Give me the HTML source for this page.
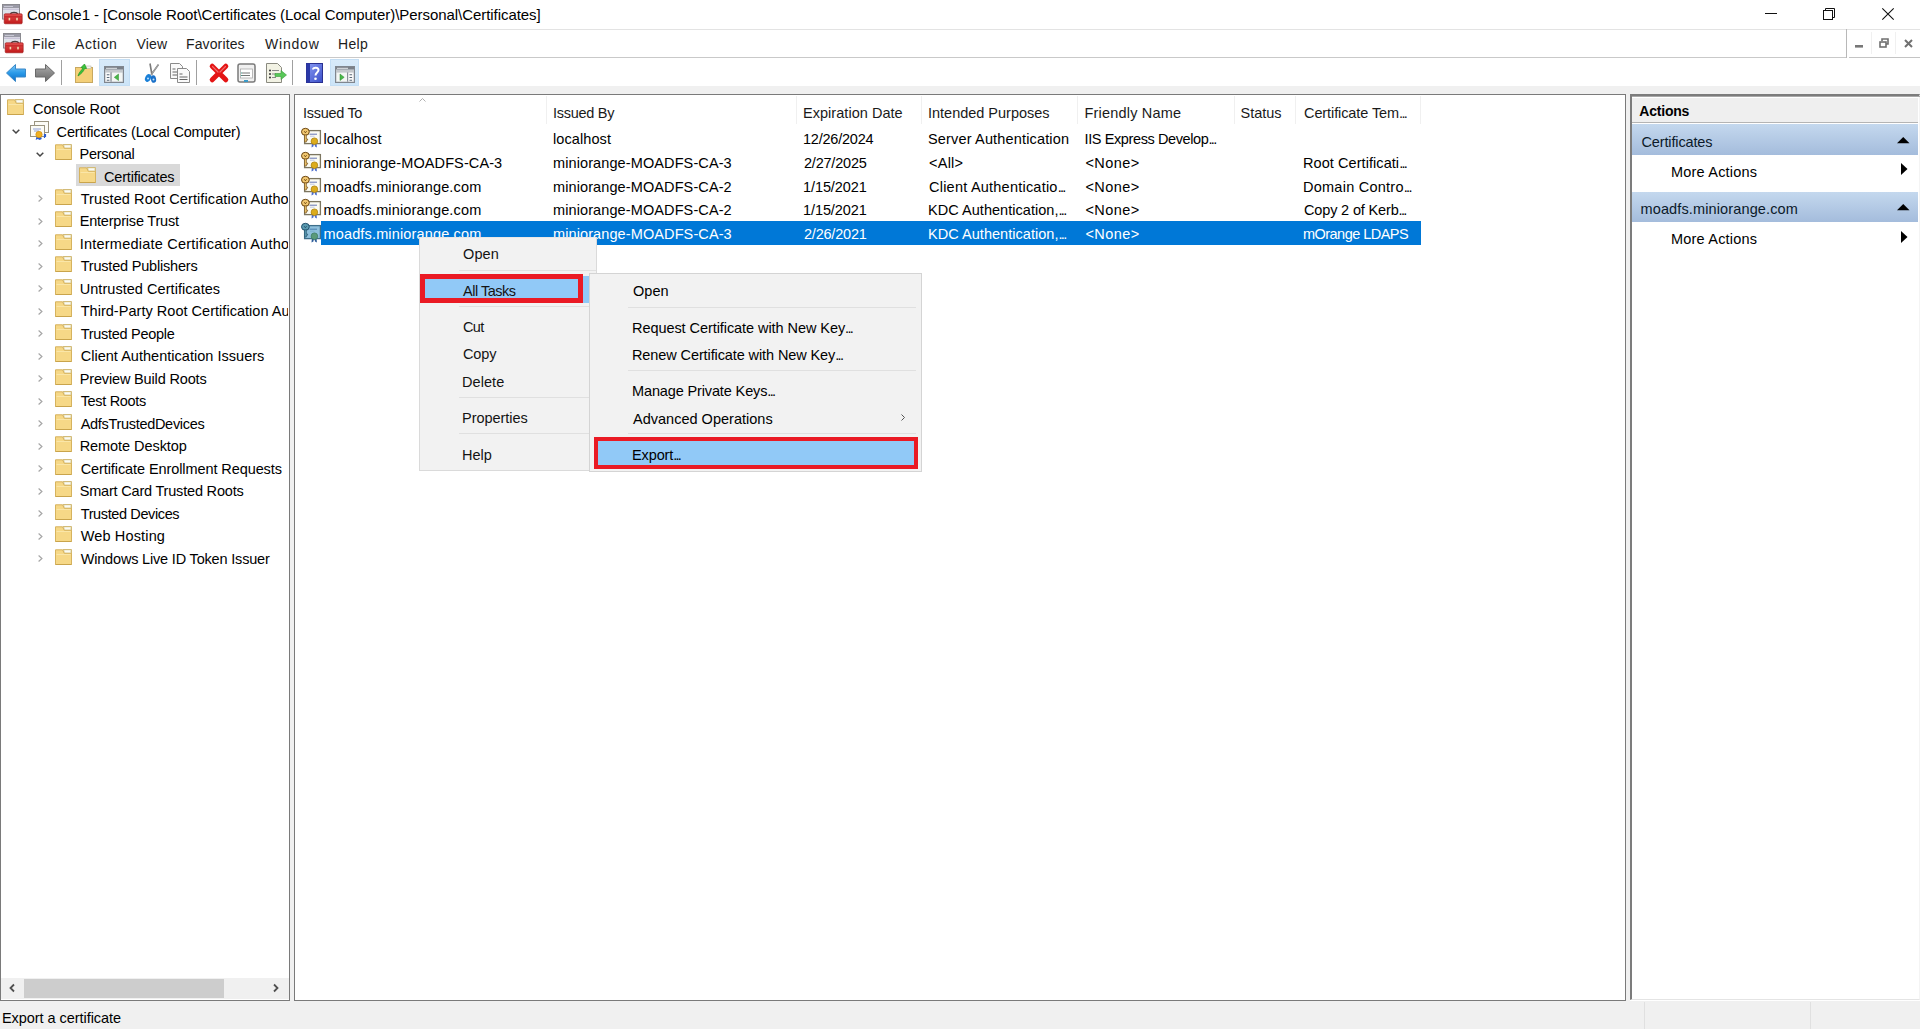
<!DOCTYPE html><html><head><meta charset="utf-8"><style>
html,body{margin:0;padding:0;width:1920px;height:1029px;overflow:hidden;background:#fff;font-family:"Liberation Sans",sans-serif;}
.a{position:absolute;box-sizing:border-box;}
.t{position:absolute;white-space:nowrap;line-height:20px;color:#000;}
.el{letter-spacing:-1.7px;margin-right:1.7px}
.clip{position:absolute;overflow:hidden;}
svg{position:absolute;overflow:visible;}
</style></head><body>
<svg style="left:2px;top:4px" width="22" height="21" viewBox="0 0 22 21">
<rect x=".5" y=".5" width="17" height="14.5" fill="#e4e4ea" stroke="#8a8a90"/>
<rect x="1" y="1" width="16" height="3" fill="#9a9aa6"/>
<path d="M2 2.5h9" stroke="#c8c8d4" stroke-width="1"/>
<rect x="1" y="4.5" width="16" height="1.5" fill="#c8c4d8"/>
<rect x="1.5" y="6.5" width="3" height="8" fill="#d8e4e8"/>
<rect x="5.5" y="6.5" width="11" height="4" fill="#dde0ea"/>
<path d="M8.5 10.2C9 7.8 15 7.8 15.5 10.2" fill="none" stroke="#4a4040" stroke-width="1.4"/>
<defs><linearGradient id="gtb" x1="0" y1="0" x2="0" y2="1"><stop offset="0" stop-color="#e45050"/><stop offset="1" stop-color="#c01818"/></linearGradient></defs>
<rect x="2.2" y="9.8" width="18" height="10" rx="1" fill="url(#gtb)" stroke="#9a1010" stroke-width=".6"/>
<path d="M2.5 12.8h17.5" stroke="#b82020" stroke-width=".8"/>
<rect x="6.6" y="13.8" width="1.6" height="2.6" fill="#f0d8b0"/>
<rect x="14.2" y="13.8" width="1.6" height="2.6" fill="#f0d8b0"/>
</svg><div class="t" style="left:27px;top:4.80px;font-size:15px;color:#000;letter-spacing:-0.053px;">Console1 - [Console Root\Certificates (Local Computer)\Personal\Certificates]</div>
<svg style="left:1765px;top:13px" width="12" height="1" viewBox="0 0 12 1"><rect width="12" height="1" fill="#111"/></svg><svg style="left:1823px;top:8px" width="12" height="12" viewBox="0 0 12 12"><path d="M2.5 2.5v-2h9v9h-2" fill="none" stroke="#111"/><rect x=".5" y="2.5" width="9" height="9" fill="none" stroke="#111"/></svg><svg style="left:1882px;top:8px" width="12" height="12" viewBox="0 0 12 12"><path d="M.3 .3l11.4 11.4M11.7 .3l-11.4 11.4" stroke="#111" stroke-width="1.1"/></svg><div class="a" style="left:0px;top:29px;width:1920px;height:1px;background:#e3e3e3;"></div>
<div class="a" style="left:0px;top:57px;width:1847px;height:1px;background:#c9c9c9;"></div>
<svg style="left:2.8px;top:33.2px" width="22" height="21" viewBox="0 0 22 21">
<rect x=".5" y=".5" width="17" height="14.5" fill="#e4e4ea" stroke="#8a8a90"/>
<rect x="1" y="1" width="16" height="3" fill="#9a9aa6"/>
<path d="M2 2.5h9" stroke="#c8c8d4" stroke-width="1"/>
<rect x="1" y="4.5" width="16" height="1.5" fill="#c8c4d8"/>
<rect x="1.5" y="6.5" width="3" height="8" fill="#d8e4e8"/>
<rect x="5.5" y="6.5" width="11" height="4" fill="#dde0ea"/>
<path d="M8.5 10.2C9 7.8 15 7.8 15.5 10.2" fill="none" stroke="#4a4040" stroke-width="1.4"/>
<defs><linearGradient id="gtb" x1="0" y1="0" x2="0" y2="1"><stop offset="0" stop-color="#e45050"/><stop offset="1" stop-color="#c01818"/></linearGradient></defs>
<rect x="2.2" y="9.8" width="18" height="10" rx="1" fill="url(#gtb)" stroke="#9a1010" stroke-width=".6"/>
<path d="M2.5 12.8h17.5" stroke="#b82020" stroke-width=".8"/>
<rect x="6.6" y="13.8" width="1.6" height="2.6" fill="#f0d8b0"/>
<rect x="14.2" y="13.8" width="1.6" height="2.6" fill="#f0d8b0"/>
</svg><div class="t" style="left:32px;top:33.80px;font-size:14px;color:#1c1c1c;letter-spacing:0.333px;">File</div>
<div class="t" style="left:75px;top:33.80px;font-size:14px;color:#1c1c1c;letter-spacing:0.600px;">Action</div>
<div class="t" style="left:136.5px;top:33.80px;font-size:14px;color:#1c1c1c;letter-spacing:0.167px;">View</div>
<div class="t" style="left:186px;top:33.80px;font-size:14px;color:#1c1c1c;letter-spacing:0.125px;">Favorites</div>
<div class="t" style="left:265px;top:33.80px;font-size:14px;color:#1c1c1c;letter-spacing:0.800px;">Window</div>
<div class="t" style="left:338px;top:33.80px;font-size:14px;color:#1c1c1c;letter-spacing:0.333px;">Help</div>
<div class="a" style="left:1846px;top:29px;width:1px;height:29px;background:#b8b8b8;"></div>
<div class="a" style="left:1849px;top:56.5px;width:71px;height:1.5px;background:#c4c4c4;"></div>
<div class="a" style="left:1871px;top:32px;width:1px;height:22px;background:#f0f0f0;"></div>
<div class="a" style="left:1895px;top:32px;width:1px;height:22px;background:#f0f0f0;"></div>
<svg style="left:1855px;top:45px" width="8" height="3"><rect width="8" height="2.6" fill="#777"/></svg><svg style="left:1879px;top:38px" width="10" height="10" viewBox="0 0 10 10"><path d="M3 3V1h6v5H7" fill="none" stroke="#707070" stroke-width="1.6"/><rect x="1" y="4" width="6" height="5" fill="none" stroke="#707070" stroke-width="1.6"/></svg><svg style="left:1904px;top:39px" width="9" height="9" viewBox="0 0 9 9"><path d="M1 1l7 7M8 1l-7 7" stroke="#707070" stroke-width="2"/></svg><div class="a" style="left:0px;top:86px;width:1920px;height:8px;background:#f0f0f0;"></div>
<svg style="left:6px;top:64px" width="20" height="18" viewBox="0 0 20 18">
<defs><linearGradient id="gb" x1="0" y1="0" x2="0" y2="1"><stop offset="0" stop-color="#7cc8f8"/><stop offset=".5" stop-color="#2a9ae8"/><stop offset="1" stop-color="#0a6cc8"/></linearGradient></defs>
<path d="M.5 9L9.5 .5V5H19.5V13H9.5V17.5Z" fill="url(#gb)" stroke="#3a88c8" stroke-width="1" stroke-linejoin="round"/>
</svg><svg style="left:35px;top:64px" width="20" height="18" viewBox="0 0 20 18">
<defs><linearGradient id="gf" x1="0" y1="0" x2="0" y2="1"><stop offset="0" stop-color="#b0b0b0"/><stop offset=".5" stop-color="#8a8a8a"/><stop offset="1" stop-color="#6a6a6a"/></linearGradient></defs>
<path d="M19.5 9L10.5 .5V5H.5V13H10.5V17.5Z" fill="url(#gf)" stroke="#6a6a6a" stroke-width="1" stroke-linejoin="round"/>
</svg><div class="a" style="left:61px;top:60px;width:1px;height:25px;background:#a0a0a0;"></div>
<svg style="left:75px;top:64px" width="18" height="19" viewBox="0 0 18 19">
<rect x=".5" y="3.5" width="17" height="15" fill="#f4cf78" stroke="#c8a860"/>
<rect x="11" y="2" width="5" height="2.5" fill="#f4f4f0" stroke="#b8b8a8" stroke-width=".6"/>
<path d="M3 12C4 8 7 6 8 4L6 3.5 9.5 0 11.5 4.5 9.5 4.5C9 7 6 10 3 12Z" fill="#3cc43c" stroke="#2a9a2a" stroke-width=".8"/>
</svg><div class="a" style="left:99px;top:59px;width:31px;height:27px;background:linear-gradient(#d8eaf9,#cce4f7);border:1px solid #c4def4;"></div>
<svg style="left:104px;top:66px" width="20" height="17" viewBox="0 0 20 17">
<rect x=".5" y=".5" width="19" height="16" fill="#b8bec4" stroke="#80868e"/>
<rect x="1" y="1" width="18" height="2.6" fill="#7a8088"/>
<path d="M2 2.3h11" stroke="#e4e6ea" stroke-width="1"/>
<rect x="1" y="3.6" width="18" height="2.4" fill="#c4c8cc"/>
<rect x="1.5" y="6.5" width="5" height="9" fill="#fafafa"/><path d="M2.8 8.8h2.6M2.8 11.5h2.6M2.8 14.2h2.6" stroke="#5a6a7a" stroke-width="1.1"/>
<rect x="6.5" y="6.5" width="1.2" height="9" fill="#8a9098"/>
<rect x="7.8" y="6.5" width="10.7" height="9" fill="#f4f6f4"/><path d="M14.5 8v6.5l-4.2-3.2z" fill="#48b848" stroke="#2e8a2e" stroke-width=".5"/>
</svg><svg style="left:144px;top:63px" width="16" height="20" viewBox="0 0 16 20">
<path d="M6 .5L8 12M14.5 1.5L7 12" stroke="#7a7a7a" stroke-width="1.6"/>
<path d="M14.5 1.5L7 12" stroke="#c8c8c8" stroke-width=".6"/>
<ellipse cx="4" cy="15" rx="2.8" ry="4" fill="#1a80d8" transform="rotate(25 4 15)"/>
<ellipse cx="9.5" cy="16" rx="2.6" ry="3.8" fill="#1a70c8" transform="rotate(-10 9.5 16)"/>
<circle cx="4" cy="15.5" r="1" fill="#bfe0ff"/><circle cx="9.5" cy="16.5" r="1" fill="#bfe0ff"/>
</svg><svg style="left:170px;top:63px" width="21" height="20" viewBox="0 0 21 20">
<path d="M.5 .5h9l3 3v12h-12z" fill="#fafafa" stroke="#8a8a8a"/>
<path d="M2.5 6h3M2.5 9h6M2.5 12h6" stroke="#666" stroke-width="1"/>
<path d="M7.5 5.5h9l3 3v11h-12z" fill="#fafafa" stroke="#8a8a8a"/>
<path d="M9.5 11h3M9.5 14h8M9.5 16.5h8" stroke="#666" stroke-width="1"/>
</svg><div class="a" style="left:196px;top:60px;width:1px;height:25px;background:#a0a0a0;"></div>
<svg style="left:209px;top:63px" width="20" height="20" viewBox="0 0 20 20">
<path d="M3.2 3.2L16.8 16.8M16.8 3.2L3.2 16.8" stroke="#e41414" stroke-width="5" stroke-linecap="round"/>
<path d="M3.5 3.5L9 9M16.5 3.5L11 9" stroke="#f06a6a" stroke-width="1.2" stroke-linecap="round"/>
</svg><svg style="left:237px;top:63px" width="19" height="20" viewBox="0 0 19 20">
<rect x="1" y="1" width="17" height="18" rx="2" fill="#f0f0f0" stroke="#7a7a7a" stroke-width="1.5"/>
<rect x="3.5" y="6" width="12" height="9" fill="#fff" stroke="#aaa" stroke-width=".8"/>
<path d="M5 10h8M5 12.5h8" stroke="#777" stroke-width="1"/>
<path d="M4 10h1M4 12.5h1" stroke="#3a9a8a" stroke-width="1"/>
<rect x="7" y="17" width="4" height="2" fill="#3a9ac8"/>
</svg><svg style="left:266px;top:63px" width="21" height="20" viewBox="0 0 21 20">
<path d="M.5 .5h11l4 4v15h-15z" fill="#f2f2e4" stroke="#8a8a80"/>
<circle cx="4" cy="7.5" r="1" fill="#333"/><circle cx="4" cy="11" r="1" fill="#333"/><circle cx="4" cy="14.5" r="1" fill="#333"/>
<path d="M6 7.5h7M6 11h4M6 14.5h4" stroke="#888" stroke-width="1"/>
<path d="M9 10.5h6v-3l5.5 4.5-5.5 4.5v-3h-6z" fill="#58c858" stroke="#3a9a3a" stroke-width=".6"/>
</svg><div class="a" style="left:292px;top:60px;width:1px;height:25px;background:#a0a0a0;"></div>
<svg style="left:306px;top:63px" width="17" height="20" viewBox="0 0 17 20">
<defs><linearGradient id="gh" x1="0" y1="0" x2="1" y2="1"><stop offset="0" stop-color="#8a9cf4"/><stop offset="1" stop-color="#3a4ec8"/></linearGradient></defs>
<rect x=".5" y=".5" width="16" height="19" fill="url(#gh)" stroke="#2a3090"/>
<rect x=".5" y=".5" width="3.5" height="19" fill="#2a38a8"/>
<path d="M7 6.5C7 4 12.5 4 12.5 7C12.5 9.5 9.5 9.5 9.5 12.5" fill="none" stroke="#fff" stroke-width="2"/>
<circle cx="9.5" cy="15.8" r="1.3" fill="#fff"/>
</svg><div class="a" style="left:330px;top:59px;width:29px;height:27px;background:linear-gradient(#d8eaf9,#cce4f7);border:1px solid #c4def4;"></div>
<svg style="left:335px;top:66px" width="20" height="17" viewBox="0 0 20 17">
<rect x=".5" y=".5" width="19" height="16" fill="#b8bec4" stroke="#80868e"/>
<rect x="1" y="1" width="18" height="2.6" fill="#7a8088"/>
<path d="M2 2.3h11" stroke="#e4e6ea" stroke-width="1"/>
<rect x="1" y="3.6" width="18" height="2.4" fill="#c4c8cc"/>
<rect x="1.5" y="6.5" width="10.5" height="9" fill="#f4f6f4"/><path d="M5 8v6.5l4.2-3.2z" fill="#48b848" stroke="#2e8a2e" stroke-width=".5"/>
<rect x="12" y="6.5" width="1.2" height="9" fill="#8a9098"/>
<rect x="13.3" y="6.5" width="5.2" height="9" fill="#fafafa"/><path d="M14.5 8.8h2.6M14.5 11.5h2.6M14.5 14.2h2.6" stroke="#5a6a7a" stroke-width="1.1"/>
</svg><div class="a" style="left:0px;top:94px;width:290px;height:907px;background:#fff;border:1px solid #7a7a7a;border-top:1px solid #7a7a7a;"></div>
<div class="a" style="left:290px;top:94px;width:4px;height:907px;background:#f0f0f0;"></div>
<div class="clip" style="left:1px;top:95px;width:287px;height:880px;">
<div class="a" style="left:-1px;top:-95px;width:1920px;height:1029px;"><svg style="left:7px;top:99px" width="17" height="16" viewBox="0 0 17 16">
<path d="M8 .5h8.5v5h-8.5z" fill="#e9e4c8" stroke="#d2bb78" stroke-width="1"/>
<rect x="10" y="1.5" width="5" height="2" fill="#fbfbf4"/>
<path d="M.5 .8H7.5L9.3 4.3H16.5V15.5H.5Z" fill="#f6d887" stroke="#d6b35e" stroke-width="1" stroke-linejoin="round"/>
<path d="M1.5 5.5H15.5" stroke="#fae6a8" stroke-width="1"/>
<path d="M.5 15.5H16.5" stroke="#c9a44c" stroke-width="1"/>
</svg><div class="t" style="left:33px;top:99.00px;font-size:14.5px;color:#000;letter-spacing:-0.091px;">Console Root</div>
<svg style="left:12px;top:129px" width="8" height="5" viewBox="0 0 8 5"><path d="M.7 .7l3.3 3.3 3.3-3.3" fill="none" stroke="#454545" stroke-width="1.5"/></svg><svg style="left:30px;top:121px" width="20" height="20" viewBox="0 0 20 20">
<rect x="4.5" y=".5" width="14" height="11" fill="#fbfbf6" stroke="#9a9480"/>
<rect x=".5" y="4.5" width="14" height="11" fill="#fbfbf6" stroke="#9a9480"/>
<path d="M3 8h8M4 10h5" stroke="#8fa0d8" stroke-width="1"/>
<path d="M6.5 15.5l-.8 3.5 2-1 2 1 2-1 -.8-3.5z" fill="#2a5bd0"/>
<path d="M14.5 13v4M15.5 13v3" stroke="#2a5bd0" stroke-width="1.2"/>
<circle cx="9" cy="13.5" r="3.2" fill="#f0b020" stroke="#c88a10" stroke-width=".6"/>
</svg><div class="t" style="left:56.6px;top:121.50px;font-size:14.5px;color:#000;letter-spacing:-0.164px;">Certificates (Local Computer)</div>
<svg style="left:36px;top:151.5px" width="8" height="5" viewBox="0 0 8 5"><path d="M.7 .7l3.3 3.3 3.3-3.3" fill="none" stroke="#454545" stroke-width="1.5"/></svg><svg style="left:55px;top:144px" width="17" height="16" viewBox="0 0 17 16">
<path d="M8 .5h8.5v5h-8.5z" fill="#e9e4c8" stroke="#d2bb78" stroke-width="1"/>
<rect x="10" y="1.5" width="5" height="2" fill="#fbfbf4"/>
<path d="M.5 .8H7.5L9.3 4.3H16.5V15.5H.5Z" fill="#f6d887" stroke="#d6b35e" stroke-width="1" stroke-linejoin="round"/>
<path d="M1.5 5.5H15.5" stroke="#fae6a8" stroke-width="1"/>
<path d="M.5 15.5H16.5" stroke="#c9a44c" stroke-width="1"/>
</svg><div class="t" style="left:79.5px;top:144.00px;font-size:14.5px;color:#000;letter-spacing:-0.286px;">Personal</div>
<div class="a" style="left:75.5px;top:164px;width:104px;height:22px;background:#d9d9d9;"></div>
<svg style="left:78.5px;top:166.5px" width="17" height="16" viewBox="0 0 17 16">
<path d="M8 .5h8.5v5h-8.5z" fill="#e9e4c8" stroke="#d2bb78" stroke-width="1"/>
<rect x="10" y="1.5" width="5" height="2" fill="#fbfbf4"/>
<path d="M.5 .8H7.5L9.3 4.3H16.5V15.5H.5Z" fill="#f6d887" stroke="#d6b35e" stroke-width="1" stroke-linejoin="round"/>
<path d="M1.5 5.5H15.5" stroke="#fae6a8" stroke-width="1"/>
<path d="M.5 15.5H16.5" stroke="#c9a44c" stroke-width="1"/>
</svg><div class="t" style="left:104px;top:166.50px;font-size:14.5px;color:#000;letter-spacing:-0.182px;">Certificates</div>
<svg style="left:38px;top:195.0px" width="5" height="7" viewBox="0 0 5 7"><path d="M.6 .5l3.3 3-3.3 3" fill="none" stroke="#a6a6a6" stroke-width="1.2"/></svg><svg style="left:55px;top:188.6px" width="17" height="16" viewBox="0 0 17 16">
<path d="M8 .5h8.5v5h-8.5z" fill="#e9e4c8" stroke="#d2bb78" stroke-width="1"/>
<rect x="10" y="1.5" width="5" height="2" fill="#fbfbf4"/>
<path d="M.5 .8H7.5L9.3 4.3H16.5V15.5H.5Z" fill="#f6d887" stroke="#d6b35e" stroke-width="1" stroke-linejoin="round"/>
<path d="M1.5 5.5H15.5" stroke="#fae6a8" stroke-width="1"/>
<path d="M.5 15.5H16.5" stroke="#c9a44c" stroke-width="1"/>
</svg><div class="t" style="left:80.7px;top:188.60px;font-size:14.5px;color:#000;letter-spacing:0.097px;">Trusted Root Certification Autho</div>
<svg style="left:38px;top:217.5px" width="5" height="7" viewBox="0 0 5 7"><path d="M.6 .5l3.3 3-3.3 3" fill="none" stroke="#a6a6a6" stroke-width="1.2"/></svg><svg style="left:55px;top:211.1px" width="17" height="16" viewBox="0 0 17 16">
<path d="M8 .5h8.5v5h-8.5z" fill="#e9e4c8" stroke="#d2bb78" stroke-width="1"/>
<rect x="10" y="1.5" width="5" height="2" fill="#fbfbf4"/>
<path d="M.5 .8H7.5L9.3 4.3H16.5V15.5H.5Z" fill="#f6d887" stroke="#d6b35e" stroke-width="1" stroke-linejoin="round"/>
<path d="M1.5 5.5H15.5" stroke="#fae6a8" stroke-width="1"/>
<path d="M.5 15.5H16.5" stroke="#c9a44c" stroke-width="1"/>
</svg><div class="t" style="left:79.7px;top:211.10px;font-size:14.5px;color:#000;letter-spacing:-0.200px;">Enterprise Trust</div>
<svg style="left:38px;top:240.0px" width="5" height="7" viewBox="0 0 5 7"><path d="M.6 .5l3.3 3-3.3 3" fill="none" stroke="#a6a6a6" stroke-width="1.2"/></svg><svg style="left:55px;top:233.6px" width="17" height="16" viewBox="0 0 17 16">
<path d="M8 .5h8.5v5h-8.5z" fill="#e9e4c8" stroke="#d2bb78" stroke-width="1"/>
<rect x="10" y="1.5" width="5" height="2" fill="#fbfbf4"/>
<path d="M.5 .8H7.5L9.3 4.3H16.5V15.5H.5Z" fill="#f6d887" stroke="#d6b35e" stroke-width="1" stroke-linejoin="round"/>
<path d="M1.5 5.5H15.5" stroke="#fae6a8" stroke-width="1"/>
<path d="M.5 15.5H16.5" stroke="#c9a44c" stroke-width="1"/>
</svg><div class="t" style="left:79.7px;top:233.60px;font-size:14.5px;color:#000;letter-spacing:0.226px;">Intermediate Certification Autho</div>
<svg style="left:38px;top:262.5px" width="5" height="7" viewBox="0 0 5 7"><path d="M.6 .5l3.3 3-3.3 3" fill="none" stroke="#a6a6a6" stroke-width="1.2"/></svg><svg style="left:55px;top:256.1px" width="17" height="16" viewBox="0 0 17 16">
<path d="M8 .5h8.5v5h-8.5z" fill="#e9e4c8" stroke="#d2bb78" stroke-width="1"/>
<rect x="10" y="1.5" width="5" height="2" fill="#fbfbf4"/>
<path d="M.5 .8H7.5L9.3 4.3H16.5V15.5H.5Z" fill="#f6d887" stroke="#d6b35e" stroke-width="1" stroke-linejoin="round"/>
<path d="M1.5 5.5H15.5" stroke="#fae6a8" stroke-width="1"/>
<path d="M.5 15.5H16.5" stroke="#c9a44c" stroke-width="1"/>
</svg><div class="t" style="left:80.7px;top:256.10px;font-size:14.5px;color:#000;letter-spacing:-0.200px;">Trusted Publishers</div>
<svg style="left:38px;top:285.0px" width="5" height="7" viewBox="0 0 5 7"><path d="M.6 .5l3.3 3-3.3 3" fill="none" stroke="#a6a6a6" stroke-width="1.2"/></svg><svg style="left:55px;top:278.6px" width="17" height="16" viewBox="0 0 17 16">
<path d="M8 .5h8.5v5h-8.5z" fill="#e9e4c8" stroke="#d2bb78" stroke-width="1"/>
<rect x="10" y="1.5" width="5" height="2" fill="#fbfbf4"/>
<path d="M.5 .8H7.5L9.3 4.3H16.5V15.5H.5Z" fill="#f6d887" stroke="#d6b35e" stroke-width="1" stroke-linejoin="round"/>
<path d="M1.5 5.5H15.5" stroke="#fae6a8" stroke-width="1"/>
<path d="M.5 15.5H16.5" stroke="#c9a44c" stroke-width="1"/>
</svg><div class="t" style="left:79.7px;top:278.60px;font-size:14.5px;color:#000;letter-spacing:0.048px;">Untrusted Certificates</div>
<svg style="left:38px;top:307.5px" width="5" height="7" viewBox="0 0 5 7"><path d="M.6 .5l3.3 3-3.3 3" fill="none" stroke="#a6a6a6" stroke-width="1.2"/></svg><svg style="left:55px;top:301.1px" width="17" height="16" viewBox="0 0 17 16">
<path d="M8 .5h8.5v5h-8.5z" fill="#e9e4c8" stroke="#d2bb78" stroke-width="1"/>
<rect x="10" y="1.5" width="5" height="2" fill="#fbfbf4"/>
<path d="M.5 .8H7.5L9.3 4.3H16.5V15.5H.5Z" fill="#f6d887" stroke="#d6b35e" stroke-width="1" stroke-linejoin="round"/>
<path d="M1.5 5.5H15.5" stroke="#fae6a8" stroke-width="1"/>
<path d="M.5 15.5H16.5" stroke="#c9a44c" stroke-width="1"/>
</svg><div class="t" style="left:80.7px;top:301.10px;font-size:14.5px;color:#000;letter-spacing:0.030px;">Third-Party Root Certification Aut</div>
<svg style="left:38px;top:330.0px" width="5" height="7" viewBox="0 0 5 7"><path d="M.6 .5l3.3 3-3.3 3" fill="none" stroke="#a6a6a6" stroke-width="1.2"/></svg><svg style="left:55px;top:323.6px" width="17" height="16" viewBox="0 0 17 16">
<path d="M8 .5h8.5v5h-8.5z" fill="#e9e4c8" stroke="#d2bb78" stroke-width="1"/>
<rect x="10" y="1.5" width="5" height="2" fill="#fbfbf4"/>
<path d="M.5 .8H7.5L9.3 4.3H16.5V15.5H.5Z" fill="#f6d887" stroke="#d6b35e" stroke-width="1" stroke-linejoin="round"/>
<path d="M1.5 5.5H15.5" stroke="#fae6a8" stroke-width="1"/>
<path d="M.5 15.5H16.5" stroke="#c9a44c" stroke-width="1"/>
</svg><div class="t" style="left:80.7px;top:323.60px;font-size:14.5px;color:#000;letter-spacing:-0.285px;">Trusted People</div>
<svg style="left:38px;top:352.5px" width="5" height="7" viewBox="0 0 5 7"><path d="M.6 .5l3.3 3-3.3 3" fill="none" stroke="#a6a6a6" stroke-width="1.2"/></svg><svg style="left:55px;top:346.1px" width="17" height="16" viewBox="0 0 17 16">
<path d="M8 .5h8.5v5h-8.5z" fill="#e9e4c8" stroke="#d2bb78" stroke-width="1"/>
<rect x="10" y="1.5" width="5" height="2" fill="#fbfbf4"/>
<path d="M.5 .8H7.5L9.3 4.3H16.5V15.5H.5Z" fill="#f6d887" stroke="#d6b35e" stroke-width="1" stroke-linejoin="round"/>
<path d="M1.5 5.5H15.5" stroke="#fae6a8" stroke-width="1"/>
<path d="M.5 15.5H16.5" stroke="#c9a44c" stroke-width="1"/>
</svg><div class="t" style="left:80.7px;top:346.10px;font-size:14.5px;color:#000;letter-spacing:0.025px;">Client Authentication Issuers</div>
<svg style="left:38px;top:375.0px" width="5" height="7" viewBox="0 0 5 7"><path d="M.6 .5l3.3 3-3.3 3" fill="none" stroke="#a6a6a6" stroke-width="1.2"/></svg><svg style="left:55px;top:368.6px" width="17" height="16" viewBox="0 0 17 16">
<path d="M8 .5h8.5v5h-8.5z" fill="#e9e4c8" stroke="#d2bb78" stroke-width="1"/>
<rect x="10" y="1.5" width="5" height="2" fill="#fbfbf4"/>
<path d="M.5 .8H7.5L9.3 4.3H16.5V15.5H.5Z" fill="#f6d887" stroke="#d6b35e" stroke-width="1" stroke-linejoin="round"/>
<path d="M1.5 5.5H15.5" stroke="#fae6a8" stroke-width="1"/>
<path d="M.5 15.5H16.5" stroke="#c9a44c" stroke-width="1"/>
</svg><div class="t" style="left:79.7px;top:368.60px;font-size:14.5px;color:#000;letter-spacing:-0.150px;">Preview Build Roots</div>
<svg style="left:38px;top:397.5px" width="5" height="7" viewBox="0 0 5 7"><path d="M.6 .5l3.3 3-3.3 3" fill="none" stroke="#a6a6a6" stroke-width="1.2"/></svg><svg style="left:55px;top:391.1px" width="17" height="16" viewBox="0 0 17 16">
<path d="M8 .5h8.5v5h-8.5z" fill="#e9e4c8" stroke="#d2bb78" stroke-width="1"/>
<rect x="10" y="1.5" width="5" height="2" fill="#fbfbf4"/>
<path d="M.5 .8H7.5L9.3 4.3H16.5V15.5H.5Z" fill="#f6d887" stroke="#d6b35e" stroke-width="1" stroke-linejoin="round"/>
<path d="M1.5 5.5H15.5" stroke="#fae6a8" stroke-width="1"/>
<path d="M.5 15.5H16.5" stroke="#c9a44c" stroke-width="1"/>
</svg><div class="t" style="left:80.7px;top:391.10px;font-size:14.5px;color:#000;letter-spacing:-0.333px;">Test Roots</div>
<svg style="left:38px;top:420.0px" width="5" height="7" viewBox="0 0 5 7"><path d="M.6 .5l3.3 3-3.3 3" fill="none" stroke="#a6a6a6" stroke-width="1.2"/></svg><svg style="left:55px;top:413.6px" width="17" height="16" viewBox="0 0 17 16">
<path d="M8 .5h8.5v5h-8.5z" fill="#e9e4c8" stroke="#d2bb78" stroke-width="1"/>
<rect x="10" y="1.5" width="5" height="2" fill="#fbfbf4"/>
<path d="M.5 .8H7.5L9.3 4.3H16.5V15.5H.5Z" fill="#f6d887" stroke="#d6b35e" stroke-width="1" stroke-linejoin="round"/>
<path d="M1.5 5.5H15.5" stroke="#fae6a8" stroke-width="1"/>
<path d="M.5 15.5H16.5" stroke="#c9a44c" stroke-width="1"/>
</svg><div class="t" style="left:80.7px;top:413.60px;font-size:14.5px;color:#000;letter-spacing:-0.306px;">AdfsTrustedDevices</div>
<svg style="left:38px;top:442.5px" width="5" height="7" viewBox="0 0 5 7"><path d="M.6 .5l3.3 3-3.3 3" fill="none" stroke="#a6a6a6" stroke-width="1.2"/></svg><svg style="left:55px;top:436.1px" width="17" height="16" viewBox="0 0 17 16">
<path d="M8 .5h8.5v5h-8.5z" fill="#e9e4c8" stroke="#d2bb78" stroke-width="1"/>
<rect x="10" y="1.5" width="5" height="2" fill="#fbfbf4"/>
<path d="M.5 .8H7.5L9.3 4.3H16.5V15.5H.5Z" fill="#f6d887" stroke="#d6b35e" stroke-width="1" stroke-linejoin="round"/>
<path d="M1.5 5.5H15.5" stroke="#fae6a8" stroke-width="1"/>
<path d="M.5 15.5H16.5" stroke="#c9a44c" stroke-width="1"/>
</svg><div class="t" style="left:79.7px;top:436.10px;font-size:14.5px;color:#000;letter-spacing:-0.062px;">Remote Desktop</div>
<svg style="left:38px;top:465.0px" width="5" height="7" viewBox="0 0 5 7"><path d="M.6 .5l3.3 3-3.3 3" fill="none" stroke="#a6a6a6" stroke-width="1.2"/></svg><svg style="left:55px;top:458.6px" width="17" height="16" viewBox="0 0 17 16">
<path d="M8 .5h8.5v5h-8.5z" fill="#e9e4c8" stroke="#d2bb78" stroke-width="1"/>
<rect x="10" y="1.5" width="5" height="2" fill="#fbfbf4"/>
<path d="M.5 .8H7.5L9.3 4.3H16.5V15.5H.5Z" fill="#f6d887" stroke="#d6b35e" stroke-width="1" stroke-linejoin="round"/>
<path d="M1.5 5.5H15.5" stroke="#fae6a8" stroke-width="1"/>
<path d="M.5 15.5H16.5" stroke="#c9a44c" stroke-width="1"/>
</svg><div class="t" style="left:80.7px;top:458.60px;font-size:14.5px;color:#000;letter-spacing:-0.087px;">Certificate Enrollment Requests</div>
<svg style="left:38px;top:487.5px" width="5" height="7" viewBox="0 0 5 7"><path d="M.6 .5l3.3 3-3.3 3" fill="none" stroke="#a6a6a6" stroke-width="1.2"/></svg><svg style="left:55px;top:481.1px" width="17" height="16" viewBox="0 0 17 16">
<path d="M8 .5h8.5v5h-8.5z" fill="#e9e4c8" stroke="#d2bb78" stroke-width="1"/>
<rect x="10" y="1.5" width="5" height="2" fill="#fbfbf4"/>
<path d="M.5 .8H7.5L9.3 4.3H16.5V15.5H.5Z" fill="#f6d887" stroke="#d6b35e" stroke-width="1" stroke-linejoin="round"/>
<path d="M1.5 5.5H15.5" stroke="#fae6a8" stroke-width="1"/>
<path d="M.5 15.5H16.5" stroke="#c9a44c" stroke-width="1"/>
</svg><div class="t" style="left:79.7px;top:481.10px;font-size:14.5px;color:#000;letter-spacing:-0.191px;">Smart Card Trusted Roots</div>
<svg style="left:38px;top:510.0px" width="5" height="7" viewBox="0 0 5 7"><path d="M.6 .5l3.3 3-3.3 3" fill="none" stroke="#a6a6a6" stroke-width="1.2"/></svg><svg style="left:55px;top:503.6px" width="17" height="16" viewBox="0 0 17 16">
<path d="M8 .5h8.5v5h-8.5z" fill="#e9e4c8" stroke="#d2bb78" stroke-width="1"/>
<rect x="10" y="1.5" width="5" height="2" fill="#fbfbf4"/>
<path d="M.5 .8H7.5L9.3 4.3H16.5V15.5H.5Z" fill="#f6d887" stroke="#d6b35e" stroke-width="1" stroke-linejoin="round"/>
<path d="M1.5 5.5H15.5" stroke="#fae6a8" stroke-width="1"/>
<path d="M.5 15.5H16.5" stroke="#c9a44c" stroke-width="1"/>
</svg><div class="t" style="left:80.7px;top:503.60px;font-size:14.5px;color:#000;letter-spacing:-0.379px;">Trusted Devices</div>
<svg style="left:38px;top:532.5px" width="5" height="7" viewBox="0 0 5 7"><path d="M.6 .5l3.3 3-3.3 3" fill="none" stroke="#a6a6a6" stroke-width="1.2"/></svg><svg style="left:55px;top:526.1px" width="17" height="16" viewBox="0 0 17 16">
<path d="M8 .5h8.5v5h-8.5z" fill="#e9e4c8" stroke="#d2bb78" stroke-width="1"/>
<rect x="10" y="1.5" width="5" height="2" fill="#fbfbf4"/>
<path d="M.5 .8H7.5L9.3 4.3H16.5V15.5H.5Z" fill="#f6d887" stroke="#d6b35e" stroke-width="1" stroke-linejoin="round"/>
<path d="M1.5 5.5H15.5" stroke="#fae6a8" stroke-width="1"/>
<path d="M.5 15.5H16.5" stroke="#c9a44c" stroke-width="1"/>
</svg><div class="t" style="left:80.7px;top:526.10px;font-size:14.5px;color:#000;letter-spacing:0.150px;">Web Hosting</div>
<svg style="left:38px;top:555.0px" width="5" height="7" viewBox="0 0 5 7"><path d="M.6 .5l3.3 3-3.3 3" fill="none" stroke="#a6a6a6" stroke-width="1.2"/></svg><svg style="left:55px;top:548.6px" width="17" height="16" viewBox="0 0 17 16">
<path d="M8 .5h8.5v5h-8.5z" fill="#e9e4c8" stroke="#d2bb78" stroke-width="1"/>
<rect x="10" y="1.5" width="5" height="2" fill="#fbfbf4"/>
<path d="M.5 .8H7.5L9.3 4.3H16.5V15.5H.5Z" fill="#f6d887" stroke="#d6b35e" stroke-width="1" stroke-linejoin="round"/>
<path d="M1.5 5.5H15.5" stroke="#fae6a8" stroke-width="1"/>
<path d="M.5 15.5H16.5" stroke="#c9a44c" stroke-width="1"/>
</svg><div class="t" style="left:80.7px;top:548.60px;font-size:14.5px;color:#000;letter-spacing:-0.178px;">Windows Live ID Token Issuer</div>
</div></div>
<div class="a" style="left:1px;top:978px;width:288px;height:21px;background:#f0f0f0;"></div>
<div class="a" style="left:24px;top:979px;width:200px;height:18.5px;background:#cdcdcd;"></div>
<svg style="left:9px;top:984px" width="6" height="8" viewBox="0 0 6 8"><path d="M5 .5L1.5 4 5 7.5" fill="none" stroke="#505050" stroke-width="1.8"/></svg><svg style="left:273px;top:984px" width="6" height="8" viewBox="0 0 6 8"><path d="M1 .5L4.5 4 1 7.5" fill="none" stroke="#505050" stroke-width="1.8"/></svg><div class="a" style="left:294px;top:94px;width:1332px;height:907px;background:#fff;border:1px solid #7a7a7a;"></div>
<div class="a" style="left:1626px;top:94px;width:4px;height:907px;background:#f0f0f0;"></div>
<div class="a" style="left:546px;top:96px;width:1px;height:28px;background:#f0f0f0;"></div>
<div class="a" style="left:796px;top:96px;width:1px;height:28px;background:#f0f0f0;"></div>
<div class="a" style="left:921px;top:96px;width:1px;height:28px;background:#f0f0f0;"></div>
<div class="a" style="left:1077px;top:96px;width:1px;height:28px;background:#f0f0f0;"></div>
<div class="a" style="left:1234px;top:96px;width:1px;height:28px;background:#f0f0f0;"></div>
<div class="a" style="left:1295px;top:96px;width:1px;height:28px;background:#f0f0f0;"></div>
<div class="a" style="left:1420px;top:96px;width:1px;height:28px;background:#f0f0f0;"></div>
<svg style="left:418.5px;top:98px" width="7" height="4" viewBox="0 0 7 4"><path d="M.5 3.5l3-3 3 3" fill="none" stroke="#b0b0b0" stroke-width="1"/></svg><div class="t" style="left:303px;top:103.00px;font-size:14.5px;color:#1a1a1a;letter-spacing:-0.300px;">Issued To</div>
<div class="t" style="left:553px;top:103.00px;font-size:14.5px;color:#1a1a1a;letter-spacing:-0.287px;">Issued By</div>
<div class="t" style="left:803px;top:103.00px;font-size:14.5px;color:#1a1a1a;letter-spacing:0.036px;">Expiration Date</div>
<div class="t" style="left:928px;top:103.00px;font-size:14.5px;color:#1a1a1a;letter-spacing:-0.013px;">Intended Purposes</div>
<div class="t" style="left:1084.5px;top:103.00px;font-size:14.5px;color:#1a1a1a;letter-spacing:0.192px;">Friendly Name</div>
<div class="t" style="left:1240.5px;top:103.00px;font-size:14.5px;color:#1a1a1a;letter-spacing:0.000px;">Status</div>
<div class="t" style="left:1304px;top:103.00px;font-size:14.5px;color:#1a1a1a;letter-spacing:-0.093px;">Certificate Tem<span class="el">...</span></div>
<svg style="left:301px;top:128.0px" width="20" height="20" viewBox="0 0 20 20">
<rect x="3.6" y="2.6" width="15.8" height="13" fill="#fbfbf2" stroke="#7c7660" stroke-width="1.3"/>
<path d="M8.5 6.2h7.5" stroke="#6474b4" stroke-width="1"/>
<path d="M9 8.2h4.5" stroke="#c0c8e4" stroke-width="1"/>
<ellipse cx="4.4" cy="3.8" rx="3.9" ry="3.5" fill="#f2c870" stroke="#6a4410" stroke-width="1"/>
<path d="M3.2 3.2l1.2 1.6 1.2-1.6" fill="none" stroke="#6a4410" stroke-width=".9"/>
<path d="M3.6 6.8v7.2h1.8v-1.8h1.2v-1.2h-1.2v-4.2z" fill="#f2c870" stroke="#6a4410" stroke-width=".6"/>
<path d="M10.8 16l-.3 3.6 1.9-1.2.5-2.4zM15.6 16l.3 3.6-1.9-1.2-.5-2.4z" fill="#4a6ccc"/>
<circle cx="13.4" cy="13.2" r="3.3" fill="#dcac1c" stroke="#a87c08" stroke-width=".7"/>
</svg><div class="t" style="left:323.5px;top:129.00px;font-size:14.5px;color:#000;letter-spacing:0.088px;">localhost</div>
<div class="t" style="left:553px;top:129.00px;font-size:14.5px;color:#000;letter-spacing:0.088px;">localhost</div>
<div class="t" style="left:803px;top:129.00px;font-size:14.5px;color:#000;letter-spacing:-0.222px;">12/26/2024</div>
<div class="t" style="left:928px;top:129.00px;font-size:14.5px;color:#000;letter-spacing:0.160px;">Server Authentication</div>
<div class="t" style="left:1084.5px;top:129.00px;font-size:14.5px;color:#000;letter-spacing:-0.389px;">IIS Express Develop<span class="el">...</span></div>
<svg style="left:301px;top:151.8px" width="20" height="20" viewBox="0 0 20 20">
<rect x="3.6" y="2.6" width="15.8" height="13" fill="#fbfbf2" stroke="#7c7660" stroke-width="1.3"/>
<path d="M8.5 6.2h7.5" stroke="#6474b4" stroke-width="1"/>
<path d="M9 8.2h4.5" stroke="#c0c8e4" stroke-width="1"/>
<ellipse cx="4.4" cy="3.8" rx="3.9" ry="3.5" fill="#f2c870" stroke="#6a4410" stroke-width="1"/>
<path d="M3.2 3.2l1.2 1.6 1.2-1.6" fill="none" stroke="#6a4410" stroke-width=".9"/>
<path d="M3.6 6.8v7.2h1.8v-1.8h1.2v-1.2h-1.2v-4.2z" fill="#f2c870" stroke="#6a4410" stroke-width=".6"/>
<path d="M10.8 16l-.3 3.6 1.9-1.2.5-2.4zM15.6 16l.3 3.6-1.9-1.2-.5-2.4z" fill="#4a6ccc"/>
<circle cx="13.4" cy="13.2" r="3.3" fill="#dcac1c" stroke="#a87c08" stroke-width=".7"/>
</svg><div class="t" style="left:323.5px;top:152.80px;font-size:14.5px;color:#000;letter-spacing:0.105px;">miniorange-MOADFS-CA-3</div>
<div class="t" style="left:553px;top:152.80px;font-size:14.5px;color:#000;letter-spacing:0.105px;">miniorange-MOADFS-CA-3</div>
<div class="t" style="left:804px;top:152.80px;font-size:14.5px;color:#000;letter-spacing:-0.213px;">2/27/2025</div>
<div class="t" style="left:929px;top:152.80px;font-size:14.5px;color:#000;letter-spacing:0.250px;">&lt;All&gt;</div>
<div class="t" style="left:1085.5px;top:152.80px;font-size:14.5px;color:#000;letter-spacing:0.400px;">&lt;None&gt;</div>
<div class="t" style="left:1303px;top:152.80px;font-size:14.5px;color:#000;letter-spacing:0.067px;">Root Certificati<span class="el">...</span></div>
<svg style="left:301px;top:175.6px" width="20" height="20" viewBox="0 0 20 20">
<rect x="3.6" y="2.6" width="15.8" height="13" fill="#fbfbf2" stroke="#7c7660" stroke-width="1.3"/>
<path d="M8.5 6.2h7.5" stroke="#6474b4" stroke-width="1"/>
<path d="M9 8.2h4.5" stroke="#c0c8e4" stroke-width="1"/>
<ellipse cx="4.4" cy="3.8" rx="3.9" ry="3.5" fill="#f2c870" stroke="#6a4410" stroke-width="1"/>
<path d="M3.2 3.2l1.2 1.6 1.2-1.6" fill="none" stroke="#6a4410" stroke-width=".9"/>
<path d="M3.6 6.8v7.2h1.8v-1.8h1.2v-1.2h-1.2v-4.2z" fill="#f2c870" stroke="#6a4410" stroke-width=".6"/>
<path d="M10.8 16l-.3 3.6 1.9-1.2.5-2.4zM15.6 16l.3 3.6-1.9-1.2-.5-2.4z" fill="#4a6ccc"/>
<circle cx="13.4" cy="13.2" r="3.3" fill="#dcac1c" stroke="#a87c08" stroke-width=".7"/>
</svg><div class="t" style="left:323.5px;top:176.60px;font-size:14.5px;color:#000;letter-spacing:0.150px;">moadfs.miniorange.com</div>
<div class="t" style="left:553px;top:176.60px;font-size:14.5px;color:#000;letter-spacing:0.105px;">miniorange-MOADFS-CA-2</div>
<div class="t" style="left:803px;top:176.60px;font-size:14.5px;color:#000;letter-spacing:-0.088px;">1/15/2021</div>
<div class="t" style="left:929px;top:176.60px;font-size:14.5px;color:#000;letter-spacing:0.226px;">Client Authenticatio<span class="el">...</span></div>
<div class="t" style="left:1085.5px;top:176.60px;font-size:14.5px;color:#000;letter-spacing:0.400px;">&lt;None&gt;</div>
<div class="t" style="left:1303px;top:176.60px;font-size:14.5px;color:#000;letter-spacing:0.250px;">Domain Contro<span class="el">...</span></div>
<svg style="left:301px;top:199.4px" width="20" height="20" viewBox="0 0 20 20">
<rect x="3.6" y="2.6" width="15.8" height="13" fill="#fbfbf2" stroke="#7c7660" stroke-width="1.3"/>
<path d="M8.5 6.2h7.5" stroke="#6474b4" stroke-width="1"/>
<path d="M9 8.2h4.5" stroke="#c0c8e4" stroke-width="1"/>
<ellipse cx="4.4" cy="3.8" rx="3.9" ry="3.5" fill="#f2c870" stroke="#6a4410" stroke-width="1"/>
<path d="M3.2 3.2l1.2 1.6 1.2-1.6" fill="none" stroke="#6a4410" stroke-width=".9"/>
<path d="M3.6 6.8v7.2h1.8v-1.8h1.2v-1.2h-1.2v-4.2z" fill="#f2c870" stroke="#6a4410" stroke-width=".6"/>
<path d="M10.8 16l-.3 3.6 1.9-1.2.5-2.4zM15.6 16l.3 3.6-1.9-1.2-.5-2.4z" fill="#4a6ccc"/>
<circle cx="13.4" cy="13.2" r="3.3" fill="#dcac1c" stroke="#a87c08" stroke-width=".7"/>
</svg><div class="t" style="left:323.5px;top:200.40px;font-size:14.5px;color:#000;letter-spacing:0.150px;">moadfs.miniorange.com</div>
<div class="t" style="left:553px;top:200.40px;font-size:14.5px;color:#000;letter-spacing:0.105px;">miniorange-MOADFS-CA-2</div>
<div class="t" style="left:803px;top:200.40px;font-size:14.5px;color:#000;letter-spacing:-0.088px;">1/15/2021</div>
<div class="t" style="left:928px;top:200.40px;font-size:14.5px;color:#000;letter-spacing:0.039px;">KDC Authentication,<span class="el">...</span></div>
<div class="t" style="left:1085.5px;top:200.40px;font-size:14.5px;color:#000;letter-spacing:0.400px;">&lt;None&gt;</div>
<div class="t" style="left:1304px;top:200.40px;font-size:14.5px;color:#000;letter-spacing:-0.154px;">Copy 2 of Kerb<span class="el">...</span></div>
<div class="a" style="left:321px;top:221px;width:1100px;height:23.6px;background:#0078d7;"></div>
<svg style="left:301px;top:223.2px" width="20" height="20" viewBox="0 0 20 20">
<rect x="3.6" y="2.6" width="15.8" height="13" fill="#8ec0dc" stroke="#3e6e8a" stroke-width="1.3"/>
<path d="M8.5 6.2h7.5" stroke="#4a80b0" stroke-width="1"/>
<path d="M9 8.2h4.5" stroke="#7ab0d0" stroke-width="1"/>
<ellipse cx="4.4" cy="3.8" rx="3.9" ry="3.5" fill="#5a9ab0" stroke="#24506a" stroke-width="1"/>
<path d="M3.2 3.2l1.2 1.6 1.2-1.6" fill="none" stroke="#24506a" stroke-width=".9"/>
<path d="M3.6 6.8v7.2h1.8v-1.8h1.2v-1.2h-1.2v-4.2z" fill="#5a9ab0" stroke="#24506a" stroke-width=".6"/>
<path d="M10.8 16l-.3 3.6 1.9-1.2.5-2.4zM15.6 16l.3 3.6-1.9-1.2-.5-2.4z" fill="#2a5a98"/>
<circle cx="13.4" cy="13.2" r="3.3" fill="#5a9a7a" stroke="#3a7a60" stroke-width=".7"/>
</svg><div class="t" style="left:323.5px;top:224.20px;font-size:14.5px;color:#fff;letter-spacing:0.150px;">moadfs.miniorange.com</div>
<div class="t" style="left:553px;top:224.20px;font-size:14.5px;color:#fff;letter-spacing:0.105px;">miniorange-MOADFS-CA-3</div>
<div class="t" style="left:804px;top:224.20px;font-size:14.5px;color:#fff;letter-spacing:-0.213px;">2/26/2021</div>
<div class="t" style="left:928px;top:224.20px;font-size:14.5px;color:#fff;letter-spacing:0.039px;">KDC Authentication,<span class="el">...</span></div>
<div class="t" style="left:1085.5px;top:224.20px;font-size:14.5px;color:#fff;letter-spacing:0.400px;">&lt;None&gt;</div>
<div class="t" style="left:1303px;top:224.20px;font-size:14.5px;color:#fff;letter-spacing:-0.533px;">mOrange LDAPS</div>
<div class="a" style="left:1630px;top:94px;width:290px;height:906px;background:#fff;border-left:2px solid #7c7c7c;border-top:2px solid #7c7c7c;border-bottom:1px solid #e4e4e4;border-right:1px solid #f4f4f4;"></div>
<div class="a" style="left:1632px;top:96px;width:288px;height:1px;background:#a8a8a8;"></div>
<div class="a" style="left:1632px;top:98px;width:286px;height:23.5px;background:#efefef;"></div>
<div class="a" style="left:1632px;top:121.5px;width:286px;height:1.2px;background:#b4b4b4;"></div>
<div class="t" style="left:1639.3px;top:101.30px;font-size:14px;color:#000;letter-spacing:-0.217px;font-weight:bold;">Actions</div>
<div class="a" style="left:1632px;top:124px;width:286px;height:30.5px;background:linear-gradient(#c4d8ee,#a4bcdc);"></div>
<div class="t" style="left:1641.5px;top:131.50px;font-size:14.5px;color:#0c1a2a;letter-spacing:-0.136px;">Certificates</div>
<svg style="left:1897px;top:136.7px" width="12.5" height="6.2" viewBox="0 0 12.5 6.2"><path d="M0 6.2L6.25 0 12.5 6.2z" fill="#000"/></svg><div class="t" style="left:1671px;top:161.50px;font-size:14.5px;color:#000;letter-spacing:0.200px;">More Actions</div>
<svg style="left:1901px;top:163.3px" width="6.5" height="12" viewBox="0 0 6.5 12"><path d="M0 0L6.5 6 0 12z" fill="#000"/></svg><div class="a" style="left:1632px;top:191.5px;width:286px;height:30.5px;background:linear-gradient(#c4d8ee,#a4bcdc);"></div>
<div class="t" style="left:1640.5px;top:199.00px;font-size:14.5px;color:#0c1a2a;letter-spacing:0.130px;">moadfs.miniorange.com</div>
<svg style="left:1897px;top:204.2px" width="12.5" height="6.2" viewBox="0 0 12.5 6.2"><path d="M0 6.2L6.25 0 12.5 6.2z" fill="#000"/></svg><div class="t" style="left:1671px;top:229.00px;font-size:14.5px;color:#000;letter-spacing:0.200px;">More Actions</div>
<svg style="left:1901px;top:230.8px" width="6.5" height="12" viewBox="0 0 6.5 12"><path d="M0 0L6.5 6 0 12z" fill="#000"/></svg><div class="a" style="left:419px;top:236.5px;width:178px;height:234.5px;background:#f2f2f2;border:1px solid #dadada;border-top-color:#e8e8e8;"></div>
<div class="a" style="left:459px;top:270px;width:137px;height:1px;background:#e0e0e0;"></div>
<div class="a" style="left:459px;top:306px;width:130px;height:1px;background:#e0e0e0;"></div>
<div class="a" style="left:459px;top:397px;width:130px;height:1px;background:#e0e0e0;"></div>
<div class="a" style="left:459px;top:433px;width:130px;height:1px;background:#e0e0e0;"></div>
<div class="a" style="left:421px;top:276px;width:168px;height:27px;background:#91c9f7;"></div>
<div class="t" style="left:463px;top:244.30px;font-size:14.5px;color:#141414;letter-spacing:0.133px;">Open</div>
<div class="t" style="left:463px;top:280.50px;font-size:14.5px;color:#141414;letter-spacing:-0.487px;">All Tasks</div>
<div class="t" style="left:463px;top:316.70px;font-size:14.5px;color:#141414;letter-spacing:-0.650px;">Cut</div>
<div class="t" style="left:463px;top:344.30px;font-size:14.5px;color:#141414;letter-spacing:-0.100px;">Copy</div>
<div class="t" style="left:462px;top:372.30px;font-size:14.5px;color:#141414;letter-spacing:0.060px;">Delete</div>
<div class="t" style="left:462px;top:408.30px;font-size:14.5px;color:#141414;letter-spacing:-0.033px;">Properties</div>
<div class="t" style="left:462px;top:444.50px;font-size:14.5px;color:#141414;letter-spacing:0.000px;">Help</div>
<div class="a" style="left:420px;top:274px;width:163px;height:29px;border:5px solid #ea1a24;"></div>
<div class="a" style="left:589px;top:273px;width:333px;height:199px;background:#f2f2f2;border:1px solid #d4d4d4;"></div>
<div class="a" style="left:628px;top:307px;width:288px;height:1px;background:#e0e0e0;"></div>
<div class="a" style="left:628px;top:370px;width:288px;height:1px;background:#e0e0e0;"></div>
<div class="a" style="left:628px;top:433px;width:288px;height:1px;background:#e0e0e0;"></div>
<div class="a" style="left:597px;top:441px;width:317px;height:24px;background:#91c9f7;"></div>
<div class="t" style="left:633px;top:281.20px;font-size:14.5px;color:#000;letter-spacing:0.067px;">Open</div>
<div class="t" style="left:632px;top:317.60px;font-size:14.5px;color:#000;letter-spacing:-0.065px;">Request Certificate with New Key<span class="el">...</span></div>
<div class="t" style="left:632px;top:345.00px;font-size:14.5px;color:#000;letter-spacing:-0.103px;">Renew Certificate with New Key<span class="el">...</span></div>
<div class="t" style="left:632px;top:381.20px;font-size:14.5px;color:#000;letter-spacing:-0.133px;">Manage Private Keys<span class="el">...</span></div>
<div class="t" style="left:633px;top:408.70px;font-size:14.5px;color:#000;letter-spacing:0.011px;">Advanced Operations</div>
<svg style="left:901px;top:414px" width="4" height="7" viewBox="0 0 4 7"><path d="M.5 .5L3.5 3.5.5 6.5" fill="none" stroke="#555" stroke-width="1"/></svg><div class="t" style="left:632px;top:445.30px;font-size:14.5px;color:#000;letter-spacing:-0.120px;">Export<span class="el">...</span></div>
<div class="a" style="left:594px;top:437px;width:324px;height:31.7px;border:4.9px solid #ea1a24;"></div>
<div class="a" style="left:0px;top:1001px;width:1920px;height:28px;background:#f0f0f0;"></div>
<div class="a" style="left:1644px;top:1002px;width:1px;height:27px;background:#e0e0e0;"></div>
<div class="a" style="left:1810px;top:1002px;width:1px;height:27px;background:#e0e0e0;"></div>
<div class="t" style="left:2px;top:1007.50px;font-size:14.5px;color:#000;letter-spacing:-0.053px;">Export a certificate</div>
</body></html>
